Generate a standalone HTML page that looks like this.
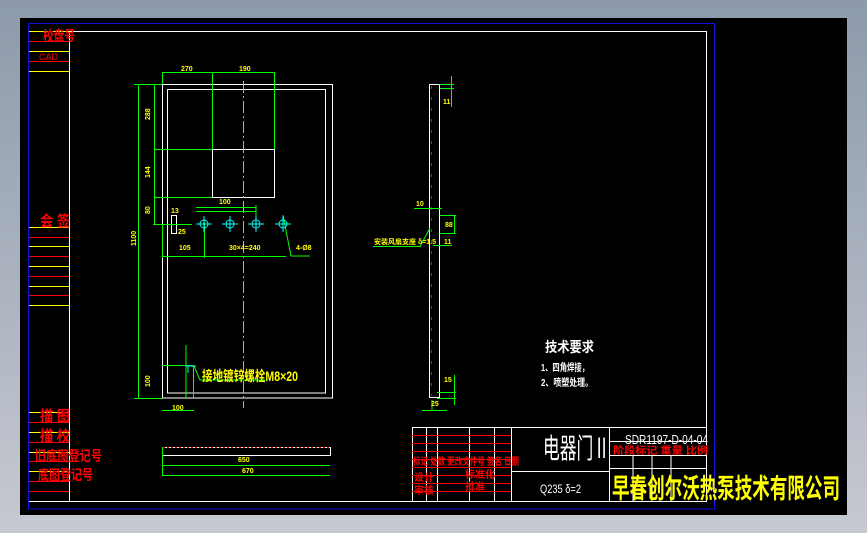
<!DOCTYPE html>
<html><head><meta charset="utf-8"><style>
html,body{margin:0;padding:0;width:867px;height:533px;overflow:hidden;background:linear-gradient(#8d9aab,#c6c9d1);}
svg{position:absolute;left:0;top:0}
text{font-family:"Liberation Sans","Noto Sans CJK SC",sans-serif}
</style></head><body>
<svg width="867" height="533" viewBox="0 0 867 533">
<rect x="20" y="18" width="827" height="497" fill="#000"/>
<rect x="28.5" y="23.5" width="686" height="485.5" fill="none" stroke="#1010e0" stroke-width="1"/>
<g stroke="#fff" stroke-width="1" fill="none">
<path d="M29 31.5H706.5V501.5H29M69.5 31V501"/>
</g>
<g stroke-width="1">
<g stroke="#ff0">
<path d="M29 31.5H69M29 51.5H69M29 71.5H69M29 227.5H69M29 246.5H69M29 266.5H69M29 286.5H69M29 305.5H69M29 412.5H69M29 432.5H69M29 452.5H69M29 471.5H69"/>
</g>
<g stroke="#f00">
<path d="M29 41.5H69M29 61.5H69M29 237.5H69M29 256.5H69M29 276.5H69M29 295.5H69M29 422.5H69M29 442.5H69M29 461.5H69M29 481.5H69M29 491.5H69"/>
</g>
</g>
<g fill="#f00" font-weight="bold">
<text x="43" y="41" font-size="14" textLength="32" lengthAdjust="spacingAndGlyphs">校盘号</text>
<text x="39" y="60" font-size="9" font-weight="normal">CAD</text>
<text x="40" y="226" font-size="15" textLength="30" lengthAdjust="spacingAndGlyphs">会  签</text>
<text x="40" y="421" font-size="15" textLength="30" lengthAdjust="spacingAndGlyphs">描  图</text>
<text x="40" y="441" font-size="15" textLength="30" lengthAdjust="spacingAndGlyphs">描  校</text>
<text x="35" y="461" font-size="14" textLength="67" lengthAdjust="spacingAndGlyphs">旧底图登记号</text>
<text x="38" y="480" font-size="14" textLength="55" lengthAdjust="spacingAndGlyphs">底图登记号</text>
</g>
<g stroke="#fff" fill="none" stroke-width="1">
<rect x="162.5" y="84.5" width="170" height="313.5"/>
<rect x="167.5" y="89.5" width="158" height="303.5"/>
<rect x="212.5" y="149.5" width="62" height="48"/>
<rect x="171.5" y="215.5" width="5" height="18"/>
</g>
<g stroke="#0f0" fill="none" stroke-width="1">
<path d="M162.5 72.5H274.5M162.5 72V84M212.5 72V149M274.5 72V149M138.5 84V398M134 84.5H162M154.5 84V224M154 149.5H212M154 197.5H212M153 224.5H192M162.5 224V258M162 256.5H286M204.5 222V258M196 211.5H256M196 207.5H256M186 345V398M162 365.5H194M193.5 365V398M162 410.5H194M134 398.5H162M256 205V230M283 215L291 256H310"/>
<path d="M194 366L200 380H265"/>
</g>
<path d="M243.5 81V408" stroke="#0ff" stroke-width="1" stroke-dasharray="12,3,2,3"/>
<g stroke="#0ff" fill="none" stroke-width="1">
<circle cx="204" cy="224" r="4"/><circle cx="230" cy="224" r="4"/><circle cx="256" cy="224" r="4"/><circle cx="283" cy="224" r="4"/>
<path d="M196 224H212M204 216V232M222 224H238M230 216V232M248 224H264M256 216V232M275 224H291M283 216V232M188 365V373M186 366H196"/>
</g>
<g fill="#ff0" font-size="7" font-weight="bold">
<text x="181" y="71">270</text><text x="239" y="71">190</text>
<text x="150" y="120" transform="rotate(-90 150 120)">288</text>
<text x="150" y="178" transform="rotate(-90 150 178)">144</text>
<text x="150" y="214" transform="rotate(-90 150 214)">80</text>
<text x="136" y="246" transform="rotate(-90 136 246)">1100</text>
<text x="219" y="204">100</text><text x="171" y="213">13</text>
<text x="179" y="250">105</text><text x="229" y="250">30×4=240</text><text x="296" y="250">4-Ø8</text>
<text x="178" y="234">25</text>
<text x="150" y="387" transform="rotate(-90 150 387)">100</text>
<text x="172" y="410">100</text>
<text x="238" y="462">650</text><text x="242" y="473">670</text>
</g>
<text x="202" y="381" fill="#ff0" font-size="14" font-weight="bold" textLength="96" lengthAdjust="spacingAndGlyphs">接地镀锌螺栓M8×20</text>
<rect x="162.5" y="447.5" width="168" height="8" fill="none" stroke="#fff"/>
<path d="M163 447.5H330" stroke="#f00" stroke-dasharray="2,2"/>
<path d="M162.5 447V476M162 465.5H330M162 475.5H330" stroke="#0f0" fill="none"/>
<g stroke="#fff" fill="none">
<path d="M429.5 84V398M439.5 84V398M429 84.5H439M429 397.5H439"/>
</g>
<path d="M431.5 86V396" stroke="#f00" stroke-dasharray="3,8"/>
<g stroke="#0f0" fill="none">
<path d="M440 84.5H454M440 88.5H454M451.5 76V107M414 208.5H442M440 215.5H456M440 233.5H456M454.5 215V234M433 245.5H452M373 246.5H420L430 228M437 392.5H456M437 398.5H456M454.5 375V405M432 400V410M422 410.5H447"/>
</g>
<g fill="#ff0" font-size="7" font-weight="bold">
<text x="443" y="104">11</text><text x="416" y="206">10</text>
<text x="445" y="227">88</text><text x="444" y="244">11</text>
<text x="374" y="244">安装风扇支座 δ=1.5</text>
<text x="444" y="382">15</text><text x="431" y="406">25</text>
</g>
<g fill="#fff" font-weight="bold">
<text x="545" y="352" font-size="14" textLength="49" lengthAdjust="spacingAndGlyphs">技术要求</text>
<text x="541" y="371" font-size="10" textLength="48" lengthAdjust="spacingAndGlyphs">1、四角焊接，</text>
<text x="541" y="386" font-size="10" textLength="52" lengthAdjust="spacingAndGlyphs">2、喷塑处理。</text>
</g>
<g stroke="#fff" fill="none">
<path d="M412.5 427.5H706M412.5 427V501M426.5 427V501M437.5 427V501M469.5 427V501M494.5 427V501M511.5 427V501M609.5 427V501M511 471.5H609M609 441.5H706M609 455.5H706M609 468.5H706M633 455V501M652 455V501M671 455V501"/>
</g>
<g stroke="#f00">
<path d="M412 435.5H511M412 443.5H511M412 451.5H511M412 459.5H511M412 467.5H511M412 475.5H511M412 483.5H511M412 491.5H511"/>
</g>
<text x="543" y="458" fill="#fff" font-size="28" textLength="67" lengthAdjust="spacingAndGlyphs">电器门Ⅱ</text>
<text x="625" y="444" fill="#fff" font-size="13" textLength="83" lengthAdjust="spacingAndGlyphs">SDR1197-D-04-04</text>
<text x="540" y="493" fill="#fff" font-size="12" textLength="41" lengthAdjust="spacingAndGlyphs">Q235 δ=2</text>
<g fill="#f00" font-size="10" font-weight="bold">
<text x="413" y="465" textLength="106" lengthAdjust="spacingAndGlyphs">标记 处数 更改文件号 签名 日期</text>
<text x="414" y="481">设计</text><text x="465" y="478">标准化</text>
<text x="414" y="494">审核</text><text x="465" y="490">批准</text>
<text x="613" y="454" textLength="95" lengthAdjust="spacingAndGlyphs">阶段标记 重量 比例</text>
</g>
<text x="612" y="498" fill="#ff0" font-size="27" font-weight="bold" textLength="228" lengthAdjust="spacingAndGlyphs">早春创尔沃热泵技术有限公司</text>
</svg>
</body></html>
